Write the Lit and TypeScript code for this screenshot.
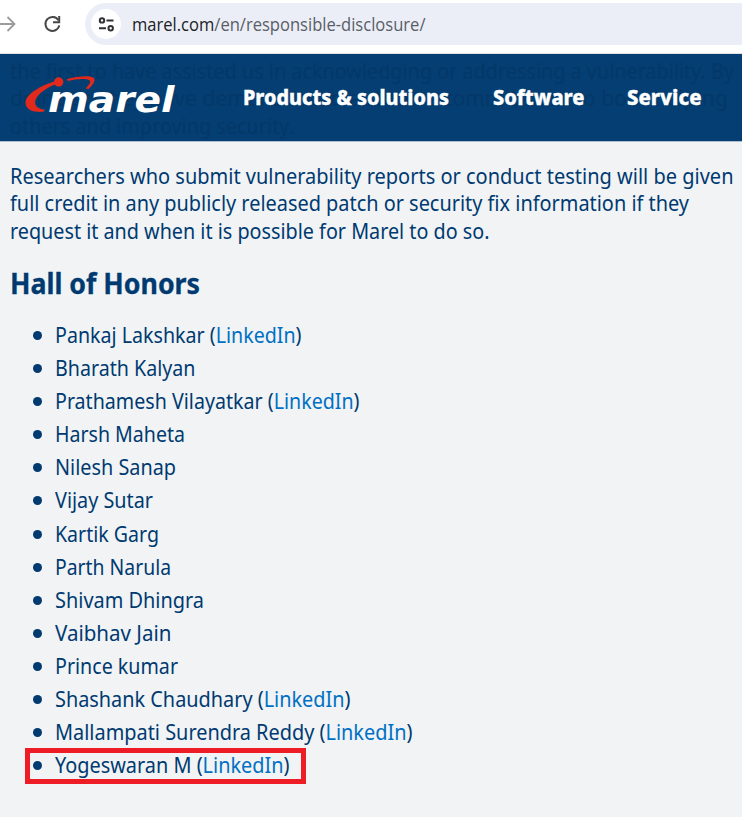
import { LitElement, html, css } from "lit";
import { customElement } from "lit/decorators.js";

type Honor = { name: string; linked?: boolean; width: number; marked?: boolean };

const honors: Honor[] = [
  { name: "Pankaj Lakshkar", linked: true, width: 246.5 },
  { name: "Bharath Kalyan", width: 140.5 },
  { name: "Prathamesh Vilayatkar", linked: true, width: 304.5 },
  { name: "Harsh Maheta", width: 130 },
  { name: "Nilesh Sanap", width: 121 },
  { name: "Vijay Sutar", width: 98 },
  { name: "Kartik Garg", width: 104 },
  { name: "Parth Narula", width: 116 },
  { name: "Shivam Dhingra", width: 149 },
  { name: "Vaibhav Jain", width: 116.5 },
  { name: "Prince kumar", width: 123 },
  { name: "Shashank Chaudhary", linked: true, width: 295.5 },
  { name: "Mallampati Surendra Reddy", linked: true, width: 357.5 },
  { name: "Yogeswaran M", linked: true, width: 234.5, marked: true },
];

@customElement("app-root")
export class AppRoot extends LitElement {
  static styles = css`
    :host {
      display: flex;
      flex-direction: column;
      height: 817px;
      overflow: hidden;
      background: #f1f3f5;
      color: #003a70;
      font-family: "Noto Sans", sans-serif;
      font-size: 21.7px;
    }
    .fit { display: inline-block; white-space: nowrap; transform-origin: left; }
    .toolbar {
      box-sizing: border-box;
      height: 54px;
      flex: none;
      display: flex;
      background: #fff;
      border-bottom: 1px solid #dfe1e5;
      padding-top: 3px;
    }
    .controls { width: 85px; height: 42px; flex: none; }
    .omnibox {
      flex: 1;
      height: 42px;
      display: flex;
      align-items: center;
      background: #ebeef7;
      border-radius: 21px 0 0 21px;
      padding-left: 6px;
    }
    .site { width: 30px; height: 30px; flex: none; }
    .url {
      margin-left: 10.5px;
      font-family: "Open Sans", sans-serif;
      font-size: 18px;
      line-height: 42px;
      color: #5a5e66;
      width: 300px;
    }
    .host { color: #202124; }
    header {
      box-sizing: border-box;
      position: relative;
      height: 88px;
      flex: none;
      overflow: hidden;
      background: #043e72;
      border-bottom: 1px solid #aebfd0;
    }
    .behind {
      position: absolute;
      inset: 2.5px 0 0 10px;
      line-height: 27.5px;
      color: #033869;
    }
    .line { display: block; height: 27.5px; }
    .bar { position: relative; display: flex; height: 87px; }
    .logo { width: 180px; height: 87px; flex: none; }
    nav {
      display: grid;
      grid-template-columns: 250px 134.5px auto;
      margin-left: 62.5px;
      line-height: 85px;
      font-size: 21.8px;
      font-weight: 800;
      color: #fff;
      -webkit-text-stroke: 0.4px #fff;
    }
    main { padding: 19.5px 0 0 9.5px; }
    p { margin: 0; line-height: 27.5px; }
    h1 {
      margin: 18.5px 0 0;
      font-size: 28.3px;
      line-height: 40px;
      font-weight: 700;
      -webkit-text-stroke: 0.3px #003a70;
    }
    ul { list-style: none; margin: 15.5px 0 0; padding: 0; }
    li {
      display: flex;
      align-items: center;
      height: 33.08px;
      line-height: 33px;
      position: relative;
      padding-left: 23px;
    }
    .dot { width: 9px; height: 9px; border-radius: 50%; background: #003a70; margin: 2px 13px 0 0; flex: none; }
    a { color: #0070c4; text-decoration: none; }
    .marker {
      position: absolute;
      box-sizing: border-box;
      left: 15.5px;
      top: 0;
      width: 281px;
      height: 36px;
      border: 5px solid #ee1c25;
    }
  `;

  firstUpdated() {
    this.renderRoot.querySelectorAll<HTMLElement>(".fit").forEach((el) => {
      const target = Number(el.dataset.w);
      el.style.transform = `scaleX(${target / el.getBoundingClientRect().width})`;
    });
  }

  private fit(content: unknown, width: number) {
    return html`<span class="fit" data-w=${width}>${content}</span>`;
  }

  private line(content: unknown, width: number) {
    return html`<span class="line">${this.fit(content, width)}</span>`;
  }

  render() {
    return html`
      <div class="toolbar">
        <svg class="controls" viewBox="0 3 85 42" fill="none">
          <path d="M0 24H14M7.500 17l7 7-7 7" stroke="#9b9b9b" stroke-width="1.8" />
          <path d="M58.400 20.200A7 7 0 1 0 59.300 25.400" stroke="#474747" stroke-width="2" />
          <path d="M59.200 16v6.200H53" stroke="#474747" stroke-width="2" />
        </svg>
        <div class="omnibox">
          <svg class="site" viewBox="91 9 30 30" fill="none">
            <circle cx="106" cy="24" r="15" fill="#fff" />
            <g stroke="#303134" stroke-width="2">
              <circle cx="102" cy="20.400" r="2.200" />
              <path d="M106.500 20.400h7M99 28.300h7" />
              <circle cx="110.700" cy="28.300" r="2.200" />
            </g>
          </svg>
          <div class="url">${this.fit(html`<span class="host">marel.com</span>/en/responsible-disclosure/`, 293.5)}</div>
        </div>
      </div>
      <header>
        <div class="behind" aria-hidden="true">
          ${this.line("the first to have assisted us in acknowledging or addressing a vulnerability. By", 724)}
          ${this.line("doing so they have demonstrated a sincere commitment to both helping", 718)}
          ${this.line("others and improving security.", 284)}
        </div>
        <div class="bar">
          <svg class="logo" viewBox="0 54 180 87">
            <path d="M56 81C42 85 25 94 25.500 103C26 111 35 112.500 43.500 111.800L45 109.500C37 109 34 105 35.500 100C38 93 48 87 59 83Z" fill="#e1291c" />
            <circle cx="58.700" cy="82" r="4.700" fill="#e1291c" />
            <path d="M67 79C78 76.500 90 75 94 78C96 81 92 86 88.500 89L85.500 88.500C89 85 91.500 82 89.500 80.300C85 78 76 79.500 67.500 81Z" fill="#e1291c" />
            <text x="48" y="112.300" font-family="DejaVu Sans, sans-serif" font-size="36" font-weight="700" font-style="oblique" textLength="126.500" lengthAdjust="spacingAndGlyphs" fill="#fff">marel</text>
          </svg>
          <nav>
            <span>${this.fit("Products & solutions", 206)}</span>
            <span>${this.fit("Software", 91.5)}</span>
            <span>${this.fit("Service", 74.5)}</span>
          </nav>
        </div>
      </header>
      <main>
        <p>
          ${this.line("Researchers who submit vulnerability reports or conduct testing will be given", 723.5)}
          ${this.line("full credit in any publicly released patch or security fix information if they", 679)}
          ${this.line("request it and when it is possible for Marel to do so.", 479.5)}
        </p>
        <h1>${this.fit("Hall of Honors", 190)}</h1>
        <ul>
          ${honors.map(
            (h) => html`<li>
              <span class="dot"></span>
              ${this.fit(h.linked ? html`${h.name} (<a>LinkedIn</a>)` : h.name, h.width)}
              ${h.marked ? html`<span class="marker"></span>` : ""}
            </li>`
          )}
        </ul>
      </main>
    `;
  }
}
